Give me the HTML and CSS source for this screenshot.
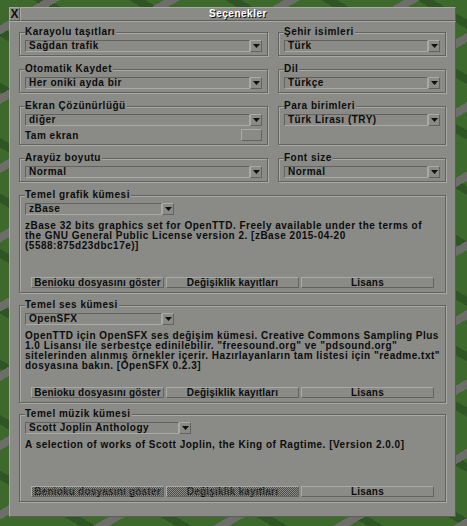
FILE: index.html
```html
<!DOCTYPE html>
<html lang="tr">
<head>
<meta charset="utf-8">
<title>Seçenekler</title>
<link rel="stylesheet" href="styles.css">
</head>
<body>
<div class="window">
  <div class="titlebar">
    <div class="close">X</div>
    <div class="title">Seçenekler</div>
  </div>
  <div class="panel">
    <div class="grid">
      <div class="frame">
        <div class="legend">Karayolu taşıtları</div>
        <div class="dropdown"><span class="dd-text">Sağdan trafik</span><span class="dd-btn"><svg width="7" height="4" viewBox="0 0 7 4"><polygon points="0,0 7,0 3.5,4" fill="#101010"/></svg></span></div>
      </div>
      <div class="frame">
        <div class="legend">Şehir isimleri</div>
        <div class="dropdown"><span class="dd-text">Türk</span><span class="dd-btn"><svg width="7" height="4" viewBox="0 0 7 4"><polygon points="0,0 7,0 3.5,4" fill="#101010"/></svg></span></div>
      </div>
      <div class="frame">
        <div class="legend">Otomatik Kaydet</div>
        <div class="dropdown"><span class="dd-text">Her oniki ayda bir</span><span class="dd-btn"><svg width="7" height="4" viewBox="0 0 7 4"><polygon points="0,0 7,0 3.5,4" fill="#101010"/></svg></span></div>
      </div>
      <div class="frame">
        <div class="legend">Dil</div>
        <div class="dropdown"><span class="dd-text">Türkçe</span><span class="dd-btn"><svg width="7" height="4" viewBox="0 0 7 4"><polygon points="0,0 7,0 3.5,4" fill="#101010"/></svg></span></div>
      </div>
      <div class="frame">
        <div class="legend">Ekran Çözünürlüğü</div>
        <div class="dropdown"><span class="dd-text">diğer</span><span class="dd-btn"><svg width="7" height="4" viewBox="0 0 7 4"><polygon points="0,0 7,0 3.5,4" fill="#101010"/></svg></span></div>
        <div class="check-row"><span>Tam ekran</span><span class="checkbox"></span></div>
      </div>
      <div class="frame">
        <div class="legend">Para birimleri</div>
        <div class="dropdown"><span class="dd-text">Türk Lirası (TRY)</span><span class="dd-btn"><svg width="7" height="4" viewBox="0 0 7 4"><polygon points="0,0 7,0 3.5,4" fill="#101010"/></svg></span></div>
      </div>
      <div class="frame">
        <div class="legend">Arayüz boyutu</div>
        <div class="dropdown"><span class="dd-text">Normal</span><span class="dd-btn"><svg width="7" height="4" viewBox="0 0 7 4"><polygon points="0,0 7,0 3.5,4" fill="#101010"/></svg></span></div>
      </div>
      <div class="frame">
        <div class="legend">Font size</div>
        <div class="dropdown"><span class="dd-text">Normal</span><span class="dd-btn"><svg width="7" height="4" viewBox="0 0 7 4"><polygon points="0,0 7,0 3.5,4" fill="#101010"/></svg></span></div>
      </div>
    </div>

    <div class="frame wide gfx">
      <div class="legend">Temel grafik kümesi</div>
      <div class="dropdown set"><span class="dd-text">zBase</span><span class="dd-btn"><svg width="7" height="4" viewBox="0 0 7 4"><polygon points="0,0 7,0 3.5,4" fill="#101010"/></svg></span></div>
      <div class="desc">zBase 32 bits graphics set for OpenTTD. Freely available under the terms of<br>the GNU General Public License version 2. [zBase 2015-04-20<br>(5588:875d23dbc17e)]</div>
      <div class="buttons">
        <div class="btn">Benioku dosyasını göster</div>
        <div class="btn">Değişiklik kayıtları</div>
        <div class="btn">Lisans</div>
      </div>
    </div>

    <div class="frame wide sfx">
      <div class="legend">Temel ses kümesi</div>
      <div class="dropdown set"><span class="dd-text">OpenSFX</span><span class="dd-btn"><svg width="7" height="4" viewBox="0 0 7 4"><polygon points="0,0 7,0 3.5,4" fill="#101010"/></svg></span></div>
      <div class="desc">OpenTTD için OpenSFX ses değişim kümesi. Creative Commons Sampling Plus<br>1.0 Lisansı ile serbestçe edinilebilir. "freesound.org" ve "pdsound.org"<br>sitelerinden alınmış örnekler içerir. Hazırlayanların tam listesi için "readme.txt"<br>dosyasına bakın. [OpenSFX 0.2.3]</div>
      <div class="buttons">
        <div class="btn">Benioku dosyasını göster</div>
        <div class="btn">Değişiklik kayıtları</div>
        <div class="btn">Lisans</div>
      </div>
    </div>

    <div class="frame wide music">
      <div class="legend">Temel müzik kümesi</div>
      <div class="dropdown set music-set"><span class="dd-text">Scott Joplin Anthology</span><span class="dd-btn"><svg width="7" height="4" viewBox="0 0 7 4"><polygon points="0,0 7,0 3.5,4" fill="#101010"/></svg></span></div>
      <div class="desc short">A selection of works of Scott Joplin, the King of Ragtime. [Version 2.0.0]</div>
      <div class="buttons">
        <div class="btn disabled">Benioku dosyasını göster</div>
        <div class="btn disabled">Değişiklik kayıtları</div>
        <div class="btn">Lisans</div>
      </div>
    </div>
  </div>
</div>
</body>
</html>
```
FILE: styles.css
```css
* { box-sizing: border-box; }

html, body { margin: 0; padding: 0; }

body {
  width: 467px;
  height: 526px;
  overflow: hidden;
  background-color: #3d6a2c;
  background-image:
    repeating-linear-gradient(150deg, transparent 0 22px, #6d6d6a 22px 30px, transparent 30px 60px),
    repeating-linear-gradient(30deg, transparent 0 40px, #2f5524 40px 48px);
  font-family: "Liberation Sans", Arial, sans-serif;
  font-weight: bold;
  font-size: 10px;
  letter-spacing: 0.5px;
  color: #0c0c0c;
}

.window {
  margin: 7px 0 0 9px;
  width: 447px;
}

.titlebar {
  display: flex;
  height: 14px;
}

.close {
  width: 11px;
  height: 14px;
  background: #8a8b87;
  border: 1px solid;
  border-color: #a9aaa6 #5d5e5a #5d5e5a #a9aaa6;
  font-size: 12px;
  line-height: 12px;
  letter-spacing: 0;
  text-align: center;
  color: #101010;
}

.title {
  flex: 1;
  height: 14px;
  background: #8a8b87;
  border: 1px solid;
  border-color: #a9aaa6 #5d5e5a #5d5e5a #a9aaa6;
  color: #ffffff;
  text-shadow: 1px 1px 0 #101010;
  text-align: center;
  font-size: 10px;
  line-height: 12px;
}

.panel {
  height: 496px;
  background: #8a8b87;
  border: 1px solid;
  border-color: #a9aaa6 #5d5e5a #5d5e5a #a9aaa6;
  padding: 10px 9px 9px 9px;
}

.grid {
  display: grid;
  grid-template-columns: 249px 168px;
  column-gap: 10px;
  row-gap: 13px;
}

.frame {
  border: 1px solid #62635f;
  box-shadow: inset 1px 1px 0 #a9aaa6, 1px 1px 0 #a9aaa6;
  padding: 0 5px 3px 5px;
}

.legend {
  width: fit-content;
  height: 12px;
  line-height: 12px;
  margin: -7px 0 0 0;
  padding: 0 1px 0 0;
  background: #8a8b87;
  white-space: nowrap;
}

.dropdown {
  display: flex;
  height: 12px;
  margin-top: 2px;
}

.dd-text {
  flex: 1;
  border: 1px solid;
  border-color: #62635f #a9aaa6 #a9aaa6 #62635f;
  padding-left: 3px;
  line-height: 10px;
  white-space: nowrap;
  overflow: hidden;
}

.dd-btn {
  width: 12px;
  border: 1px solid;
  border-color: #a9aaa6 #62635f #62635f #a9aaa6;
  display: flex;
  align-items: center;
  justify-content: center;
}

.dd-btn svg { display: block; }

.check-row {
  display: flex;
  justify-content: space-between;
  align-items: center;
  height: 12px;
  margin-top: 3px;
}

.checkbox {
  width: 21px;
  height: 12px;
  border: 1px solid;
  border-color: #a9aaa6 #62635f #62635f #a9aaa6;
}

.wide {
  margin-top: 13px;
  padding-bottom: 4px;
}

.sfx { margin-top: 12px; }
.music { margin-top: 11px; }

.set { width: 149px; }
.music-set { width: 166px; }

.desc {
  margin-top: 6px;
  height: 50px;
  line-height: 10px;
  white-space: nowrap;
}

.desc.short { height: 40px; }

.buttons {
  display: grid;
  grid-template-columns: repeat(3, 1fr);
  column-gap: 2px;
  margin: 6px 6px 0 6px;
}

.btn {
  position: relative;
  height: 11px;
  border: 1px solid;
  border-color: #a9aaa6 #62635f #62635f #a9aaa6;
  text-align: center;
  line-height: 9px;
  letter-spacing: 0.2px;
  white-space: nowrap;
}

.btn.disabled::after {
  content: "";
  position: absolute;
  inset: 0;
  background: repeating-conic-gradient(#4e4f4b 0 25%, transparent 0 50%) 0 0 / 2px 2px;
}
```
